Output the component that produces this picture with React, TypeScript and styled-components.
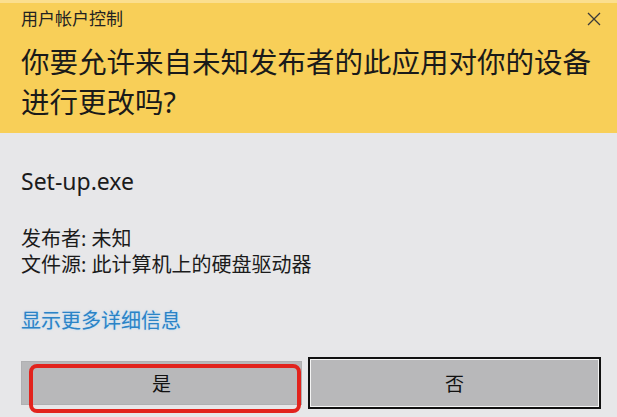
import styled, { createGlobalStyle } from "styled-components";

const GlobalStyle = createGlobalStyle`
  html, body {
    margin: 0;
    padding: 0;
    background: #e7e7e9;
    overflow: hidden;
  }
  #root {
    width: 617px;
    height: 417px;
  }
`;

const FONT = `"Noto Sans", "Noto Sans CJK SC", sans-serif`;

const Dialog = styled.div`
  width: 617px;
  height: 417px;
  display: flex;
  flex-direction: column;
  background: #e7e7e9;
  font-family: ${FONT};
  color: #1b1b1b;
`;

const Header = styled.div`
  height: 133px;
  box-sizing: border-box;
  background: #f8cf58;
  border-top: 3px solid #fbdf8f;
  padding: 0 13px 0 21px;
  display: flex;
  flex-direction: column;
`;

const TitleBar = styled.div`
  height: 31px;
  display: flex;
  align-items: center;
  justify-content: space-between;
`;

const WindowTitle = styled.span`
  font-size: 17px;
  line-height: 28px;
  color: #222;
`;

const CloseButton = styled.button`
  width: 20px;
  height: 20px;
  padding: 0;
  border: none;
  background: transparent;
  display: flex;
  align-items: center;
  justify-content: center;
`;

const Question = styled.h1`
  margin: 8px 0 0;
  font-size: 28.5px;
  font-weight: 400;
  line-height: 40px;
  color: #1a1a1a;
`;

const Body = styled.div`
  flex: 1;
  padding: 33px 16px 0 21px;
  display: flex;
  flex-direction: column;
`;

const AppName = styled.div`
  font-size: 23px;
  line-height: 30px;
`;

const Details = styled.div`
  margin-top: 30px;
  display: flex;
  flex-direction: column;
`;

const DetailLine = styled.div`
  font-size: 20px;
  line-height: 26px;
`;

const MoreLink = styled.a`
  margin-top: 30px;
  font-size: 20px;
  line-height: 26px;
  color: #2b83c6;
  text-decoration: none;
  text-shadow: 0 0 2px rgba(120, 200, 255, 0.6);
  cursor: pointer;
`;

const ButtonRow = styled.div`
  margin-top: 23px;
  display: flex;
  align-items: flex-start;
  gap: 6px;
`;

const YesWrap = styled.div`
  position: relative;
  margin-top: 4px;
`;

const DialogButton = styled.button<{ $focused?: boolean }>`
  height: ${({ $focused }) => ($focused ? "52px" : "44px")};
  width: ${({ $focused }) => ($focused ? "293px" : "281px")};
  box-sizing: border-box;
  background: #b8b8ba;
  border: ${({ $focused }) =>
    $focused ? "2px solid #111" : "1px solid #b0b0b2"};
  box-shadow: ${({ $focused }) =>
    $focused ? "inset 0 0 0 1px #f4f4f4" : "none"};
  font-family: ${FONT};
  font-size: 19px;
  color: #111;
  padding: 0;
`;

const Highlight = styled.div`
  position: absolute;
  left: 8px;
  top: 3px;
  width: 272px;
  height: 49px;
  box-sizing: border-box;
  border: 4px solid #e2231d;
  border-radius: 8px;
  pointer-events: none;
`;

export default function App() {
  return (
    <>
      <GlobalStyle />
      <Dialog>
        <Header>
          <TitleBar>
            <WindowTitle>用户帐户控制</WindowTitle>
            <CloseButton aria-label="关闭">
              <svg width="14" height="14" viewBox="0 0 14 14">
                <path
                  d="M1 1 L13 13 M13 1 L1 13"
                  stroke="#3a3a3a"
                  strokeWidth="1.3"
                  fill="none"
                />
              </svg>
            </CloseButton>
          </TitleBar>
          <Question>
            你要允许来自未知发布者的此应用对你的设备
            <br />
            进行更改吗?
          </Question>
        </Header>
        <Body>
          <AppName>Set-up.exe</AppName>
          <Details>
            <DetailLine>发布者: 未知</DetailLine>
            <DetailLine>文件源: 此计算机上的硬盘驱动器</DetailLine>
          </Details>
          <MoreLink>显示更多详细信息</MoreLink>
          <ButtonRow>
            <YesWrap>
              <DialogButton>是</DialogButton>
              <Highlight />
            </YesWrap>
            <DialogButton $focused>否</DialogButton>
          </ButtonRow>
        </Body>
      </Dialog>
    </>
  );
}
